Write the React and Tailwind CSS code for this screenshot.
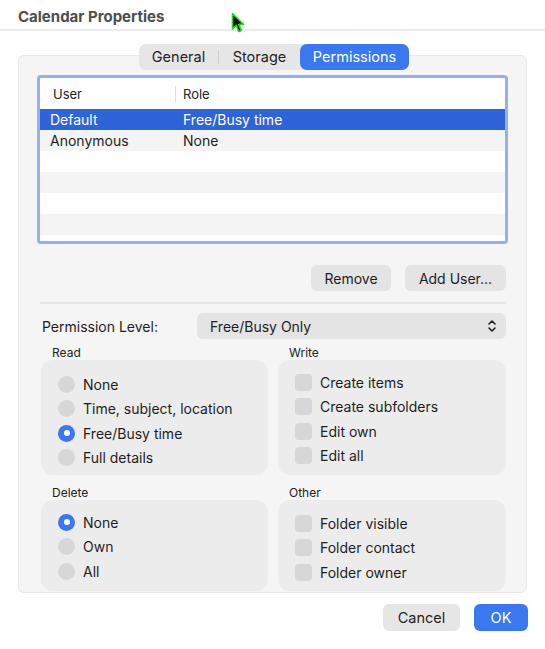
import React from "react";

function Radio({ checked, label }) {
  return (
    <div className="flex items-center h-[24.5px] shrink-0">
      {checked ? (
        <div className="w-[17px] h-[17px] rounded-full bg-[#3a78f0] flex items-center justify-center">
          <div className="w-[6px] h-[6px] rounded-full bg-white" />
        </div>
      ) : (
        <div className="w-[17px] h-[17px] rounded-full bg-[#d7d7d7]" />
      )}
      <span className="ml-[8px] text-[14px] text-[#1e1e1e]">{label}</span>
    </div>
  );
}

function Check({ label }) {
  return (
    <div className="flex items-center h-[24.5px] shrink-0">
      <div className="w-[17px] h-[17px] rounded-[4px] bg-[#d7d7d7]" />
      <span className="ml-[8px] text-[14px] text-[#1e1e1e]">{label}</span>
    </div>
  );
}

function Group({ title, children, pt, h }) {
  return (
    <div className="flex flex-col">
      <div className="text-[12px] text-[#222] pl-[11px] h-[12px] leading-[12px] shrink-0">{title}</div>
      <div className={`mt-[1px] rounded-[12px] bg-[#ececec] pl-[17px] flex flex-col shrink-0 ${pt} ${h}`}>
        {children}
      </div>
    </div>
  );
}

export default function App() {
  const rows = [
    { u: "Default", r: "Free/Busy time", sel: true },
    { u: "Anonymous", r: "None" },
    { u: "", r: "" },
    { u: "", r: "" },
    { u: "", r: "" },
    { u: "", r: "" },
    { u: "", r: "" },
  ];
  return (
    <div
      className="relative w-[545px] h-[649px] bg-white overflow-hidden text-[#1e1e1e]"
      style={{ fontFamily: "Inter, 'Noto Sans', sans-serif" }}
    >
      {/* Title */}
      <div className="h-[31px] border-b-2 border-[#ececec] pl-[18px] pt-[4px]">
        <span className="text-[15px] font-bold text-[#4d4d4d]">Calendar Properties</span>
      </div>

      {/* Cursor */}
      <svg className="absolute left-[231px] top-[12px]" width="16" height="22" viewBox="0 0 16 22">
        <path d="M1.5 1.5 L1.5 17 L5.2 13.4 L7.8 19.5 L10.3 18.4 L7.8 12.4 L12.6 12.4 Z" fill="#111" stroke="#2ad12a" strokeWidth="1.6" strokeLinejoin="round" />
      </svg>

      {/* Panel */}
      <div className="mx-[18px] mt-[24px] h-[538px] rounded-[6px] bg-[#f5f5f5] border border-[#e8e8e8] flex flex-col">
        {/* Tabs */}
        <div className="flex justify-center -mt-[12px] pl-[3px] shrink-0">
          <div className="flex items-center h-[26px] rounded-[7px] bg-[#e6e6e6] text-[14.5px]">
            <div className="w-[79px] text-center text-[#1e1e1e]">General</div>
            <div className="w-px h-[14px] bg-[#cfcfcf]" />
            <div className="w-[81px] text-center text-[#1e1e1e]">Storage</div>
            <div className="w-[109px] h-[26px] rounded-[7px] bg-[#3a78f0] text-white flex items-center justify-center">
              Permissions
            </div>
          </div>
        </div>

        {/* Table */}
        <div className="mx-[18px] mt-[5px] h-[169px] shrink-0 border-[3px] border-[#94b1ef] rounded-[4px] bg-white overflow-hidden">
          <div className="h-[31px] flex items-center text-[13px] text-[#222] pt-[2px]">
            <div className="w-[136px] pl-[13px] border-r border-[#e0e0e0] h-[17px] leading-[17px]">User</div>
            <div className="pl-[7px]">Role</div>
          </div>
          {rows.map((r, i) => (
            <div
              key={i}
              className={`h-[21px] flex items-center text-[14px] ${
                r.sel ? "bg-[#2f63d8] text-white" : i % 2 === 1 ? "bg-[#f4f4f4]" : "bg-white"
              }`}
            >
              <div className="w-[132px] pl-[10px]">{r.u}</div>
              <div className="pl-[11px]">{r.r}</div>
            </div>
          ))}
        </div>

        {/* Buttons */}
        <div className="flex justify-end gap-[14px] mt-[21px] pr-[20px] shrink-0">
          <div className="w-[80px] h-[26px] rounded-[6px] bg-[#e4e4e4] flex items-center justify-center text-[14px]">Remove</div>
          <div className="w-[101px] h-[26px] rounded-[6px] bg-[#e4e4e4] flex items-center justify-center text-[14px]">Add User...</div>
        </div>

        <div className="ml-[21px] mr-[20px] mt-[11px] h-[2px] bg-[#e6e6e6] shrink-0" />

        {/* Permission level */}
        <div className="flex items-center ml-[21px] mr-[20px] mt-[9px] shrink-0">
          <div className="w-[157px] pl-[2px] text-[14px]">Permission Level:</div>
          <div className="flex-1 h-[26px] rounded-[6px] bg-[#e4e4e4] flex items-center justify-between pl-[13px] pr-[9px] text-[14px]">
            <span>Free/Busy Only</span>
            <svg width="10" height="14" viewBox="0 0 10 14">
              <path d="M2 5 L5 2 L8 5" fill="none" stroke="#222" strokeWidth="1.6" strokeLinecap="round" strokeLinejoin="round" />
              <path d="M2 9 L5 12 L8 9" fill="none" stroke="#222" strokeWidth="1.6" strokeLinecap="round" strokeLinejoin="round" />
            </svg>
          </div>
        </div>

        {/* Groups */}
        <div className="grid grid-cols-[227px_228px] gap-x-[10px] mx-[22px] mt-[8px] shrink-0">
          <Group title="Read" pt="pt-[12px]" h="h-[115px]">
            <Radio label="None" />
            <Radio label="Time, subject, location" />
            <Radio checked label="Free/Busy time" />
            <Radio label="Full details" />
          </Group>
          <Group title="Write" pt="pt-[10px]" h="h-[115px]">
            <Check label="Create items" />
            <Check label="Create subfolders" />
            <Check label="Edit own" />
            <Check label="Edit all" />
          </Group>
        </div>
        <div className="grid grid-cols-[227px_228px] gap-x-[10px] mx-[22px] mt-[12px] shrink-0">
          <Group title="Delete" pt="pt-[10px]" h="h-[91px]">
            <Radio checked label="None" />
            <Radio label="Own" />
            <Radio label="All" />
          </Group>
          <Group title="Other" pt="pt-[11px]" h="h-[91px]">
            <Check label="Folder visible" />
            <Check label="Folder contact" />
            <Check label="Folder owner" />
          </Group>
        </div>
      </div>

      {/* Footer buttons */}
      <div className="flex justify-end gap-[14px] mt-[11px] pr-[17px]">
        <div className="w-[77px] h-[27px] rounded-[6px] bg-[#e6e6e6] flex items-center justify-center text-[14.5px]">Cancel</div>
        <div className="w-[54px] h-[27px] rounded-[6px] bg-[#3a78f0] text-white flex items-center justify-center text-[14.5px]">OK</div>
      </div>
    </div>
  );
}
